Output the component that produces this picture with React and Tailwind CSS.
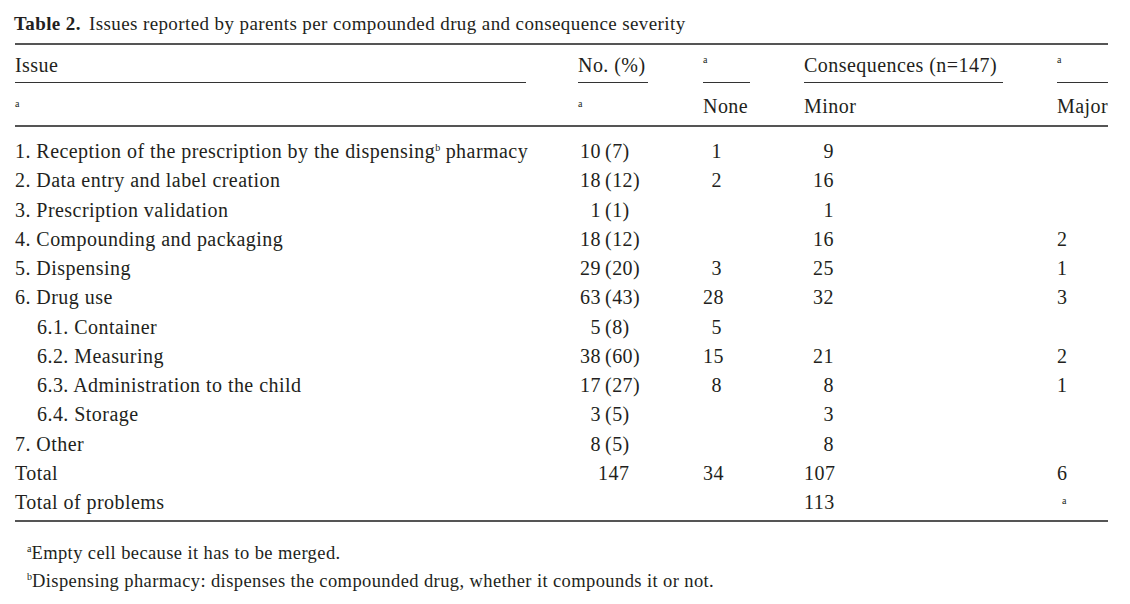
const ROWS = [
  { issue: <>1. Reception of the prescription by the dispensing<Sup>b</Sup> pharmacy</>, n: '10', p: '7', none: '1', minor: '9' },
  { issue: '2. Data entry and label creation', n: '18', p: '12', none: '2', minor: '16' },
  { issue: '3. Prescription validation', n: '1', p: '1', minor: '1' },
  { issue: '4. Compounding and packaging', n: '18', p: '12', minor: '16', major: '2' },
  { issue: '5. Dispensing', n: '29', p: '20', none: '3', minor: '25', major: '1' },
  { issue: '6. Drug use', n: '63', p: '43', none: '28', minor: '32', major: '3' },
  { issue: '6.1. Container', sub: true, n: '5', p: '8', none: '5' },
  { issue: '6.2. Measuring', sub: true, n: '38', p: '60', none: '15', minor: '21', major: '2' },
  { issue: '6.3. Administration to the child', sub: true, n: '17', p: '27', none: '8', minor: '8', major: '1' },
  { issue: '6.4. Storage', sub: true, n: '3', p: '5', minor: '3' },
  { issue: '7. Other', n: '8', p: '5', minor: '8' },
  { issue: 'Total', total: '147', none: '34', minor: '107', major: '6' },
  { issue: 'Total of problems', minor: '113', majorNote: true },
];

function Sup({ children }) {
  return <span className="relative -top-[7px] text-[10px] leading-none tracking-normal">{children}</span>;
}

function Note({ pad = 'pt-[10px]' }) {
  return <span className={`block text-[10px] leading-none ${pad}`}>a</span>;
}

const GRID = 'grid grid-cols-[563px_125px_101px_253px_51px]';

export default function App() {
  return (
    <div className="w-[1130px] h-[604px] bg-white pl-[15px] text-[#231f20] font-['Liberation_Serif',serif]">
      <div className="w-[1093px]">
        {/* caption */}
        <div className="h-[43px] pt-[12px] text-[19px] leading-[24px] tracking-[0.4px] -ml-px">
          <span className="font-bold">Table 2.</span>
          <span className="ml-[8px]">Issues reported by parents per compounded drug and consequence severity</span>
        </div>
        <div className="h-[2px] bg-[#555]" />

        {/* header */}
        <div className={`${GRID} text-[20px] leading-[29px] tracking-[0.45px]`}>
          <div className="h-[38px] pt-[6px] w-[511px] border-b border-[#333]">Issue</div>
          <div className="h-[38px] pt-[6px] w-[70px] border-b border-[#333]">No. (%)</div>
          <div className="h-[38px] w-[47px] border-b border-[#333]"><Note /></div>
          <div className="h-[38px] pt-[6px] w-[199px] border-b border-[#333]">Consequences (n=147)</div>
          <div className="h-[38px] border-b border-[#333]"><Note /></div>

          <div className="h-[42px]"><Note pad="pt-[16px]" /></div>
          <div className="h-[42px]"><Note pad="pt-[16px]" /></div>
          <div className="h-[42px] pt-[9px]">None</div>
          <div className="h-[42px] pt-[9px]">Minor</div>
          <div className="h-[42px] pt-[9px]">Major</div>
        </div>
        <div className="h-[2px] bg-[#555]" />

        {/* body */}
        <div className="pt-[10px] pb-[3px] text-[20px] leading-[29.25px] tracking-[0.45px]">
          {ROWS.map((r, i) => (
            <div key={i} className={GRID}>
              <div className={r.sub ? 'pl-[22px]' : ''}>{r.issue}</div>
              <div className="flex">
                {r.total ? (
                  <span className="pl-[20px]">{r.total}</span>
                ) : r.n ? (
                  <>
                    <span className="w-[23px] text-right">{r.n}</span>
                    <span className="ml-[4px]">({r.p})</span>
                  </>
                ) : null}
              </div>
              <div><span className="block w-[19px] text-right">{r.none}</span></div>
              <div><span className="block w-[30px] text-right">{r.minor}</span></div>
              <div>
                {r.majorNote ? (
                  <span className="block w-[10px] text-right text-[10px] leading-none pt-[8px]">a</span>
                ) : (
                  <span className="block w-[10px] text-right">{r.major}</span>
                )}
              </div>
            </div>
          ))}
        </div>
        <div className="h-[2px] bg-[#555]" />

        {/* footnotes */}
        <div className="mt-[17px] pl-[12px] text-[18.5px] leading-[28px] tracking-[0.4px]">
          <p><Sup>a</Sup>Empty cell because it has to be merged.</p>
          <p><Sup>b</Sup>Dispensing pharmacy: dispenses the compounded drug, whether it compounds it or not.</p>
        </div>
      </div>
    </div>
  );
}
